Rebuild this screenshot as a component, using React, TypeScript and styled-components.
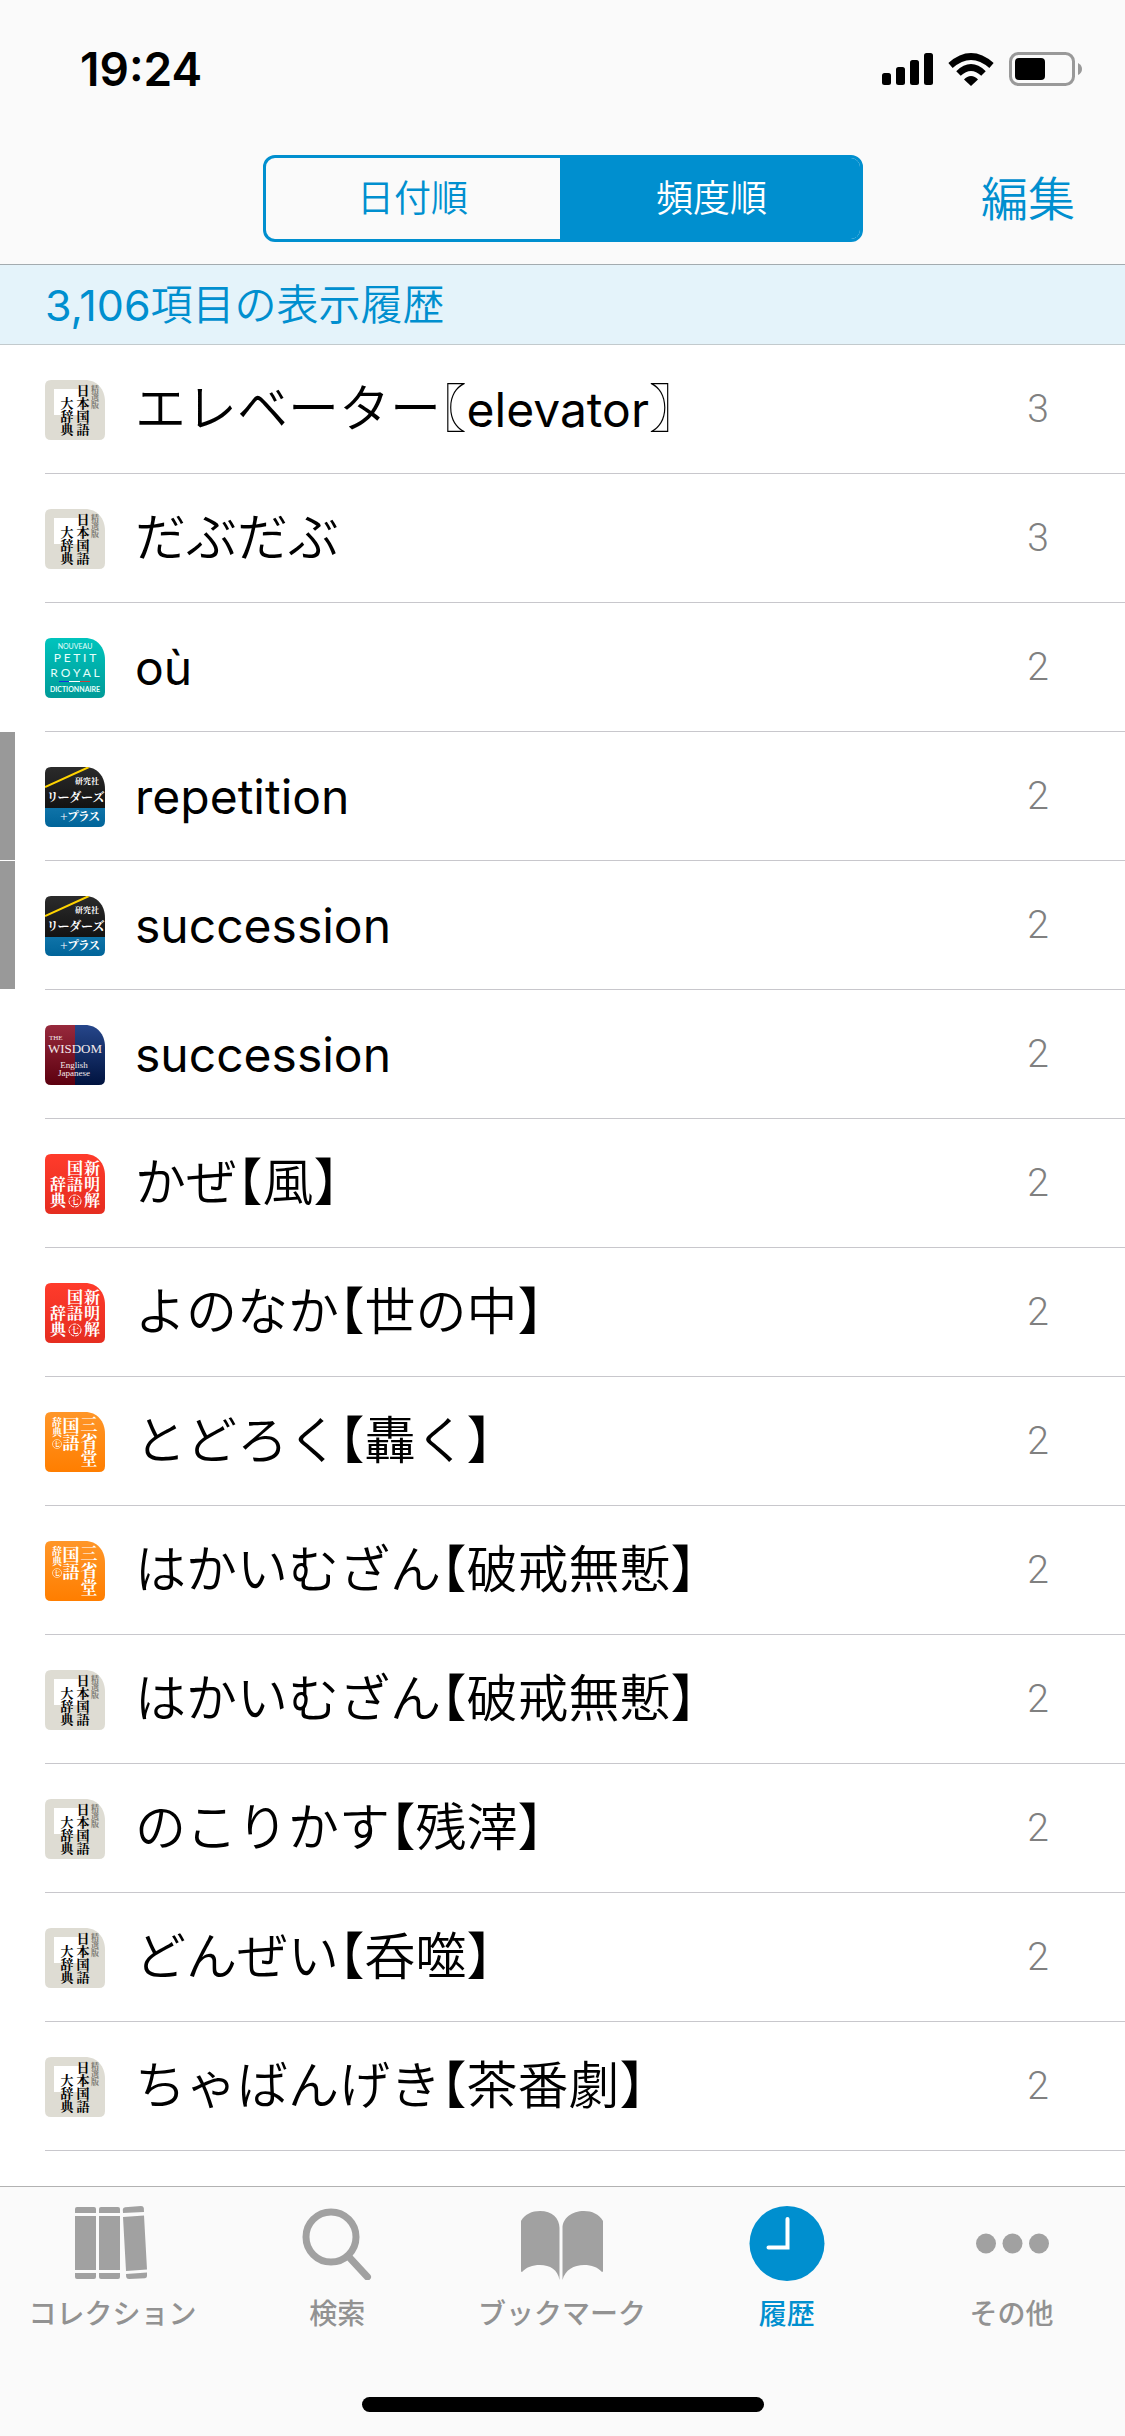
import type { ReactNode } from "react";
import { useState } from "react";
import styled, { createGlobalStyle } from "styled-components";

const GlobalStyle = createGlobalStyle`
  * {
    box-sizing: border-box;
  }

  body {
    margin: 0;
    background: #ffffff;
    color: #000000;
    font-family: "Inter", "Noto Sans CJK JP", sans-serif;
  }

  button {
    margin: 0;
    padding: 0;
    border: 0;
    background: none;
    font-family: inherit;
    cursor: pointer;
  }
`;

const Screen = styled.div`
  min-height: 100vh;
  display: flex;
  flex-direction: column;
`;

const Header = styled.header`
  background: #fafafa;
  border-bottom: 1px solid #a3abaf;
`;

const StatusBar = styled.div`
  height: 138px;
  padding: 0 43px 0 80px;
  display: flex;
  align-items: center;
  justify-content: space-between;
`;

const Clock = styled.time`
  font-size: 46px;
  font-weight: 600;
  line-height: 56px;
`;

const StatusIcons = styled.div`
  display: flex;
  align-items: center;
  gap: 15px;
`;

const NavBar = styled.nav`
  height: 126px;
  padding: 17px 50px 22px;
  display: grid;
  grid-template-columns: 1fr 600px 1fr;
  align-items: center;
`;

const Segments = styled.div`
  grid-column: 2;
  height: 87px;
  display: grid;
  grid-template-columns: 49fr 50fr;
  border: 3px solid #008fcf;
  border-radius: 12px;
  overflow: hidden;
`;

const Segment = styled.button<{ $active: boolean }>`
  background: ${({ $active }) => ($active ? "#008fcf" : "transparent")};
  color: ${({ $active }) => ($active ? "#ffffff" : "#008fcf")};
  font-size: 37px;
  font-weight: 350;
  line-height: 48px;

  & + & {
    padding-left: 4px;
  }
`;

const EditButton = styled.button`
  justify-self: end;
  color: #008fcf;
  font-size: 47px;
  font-weight: 350;
  line-height: 56px;
`;

const SectionTitle = styled.h2`
  height: 80px;
  margin: 0;
  padding: 0 45px;
  display: flex;
  align-items: center;
  background: #e4f3fa;
  border-bottom: 1px solid #c2cacd;
  color: #008fcf;
  font-size: 42px;
  font-weight: 350;
  line-height: 56px;

  span {
    font-size: 43px;
    font-weight: 400;
  }
`;

const List = styled.ul`
  flex: 1;
  margin: 0;
  padding: 0;
  list-style: none;
`;

const Row = styled.li`
  height: 129px;
  display: flex;
`;

const Marker = styled.div<{ $marked: boolean }>`
  width: 15px;
  margin: 0 30px 1px 0;
  background: ${({ $marked }) => ($marked ? "#999999" : "transparent")};
`;

const RowBody = styled.div`
  flex: 1;
  padding: 2px 76px 0 0;
  display: flex;
  align-items: center;
  border-bottom: 1px solid #c8c7cc;
`;

const Word = styled.span`
  flex: 1;
  margin-left: 30px;
  padding-bottom: 2px;
  font-size: 51px;
  font-weight: 350;
  line-height: 72px;
  font-feature-settings: "halt";
`;

const Latin = styled.span`
  font-size: 48px;
  font-weight: 400;
`;

const Count = styled.span`
  padding-bottom: 2px;
  color: #808080;
  font-family: "Roboto", sans-serif;
  font-size: 39px;
  font-weight: 300;
  line-height: 48px;
`;

const TabBar = styled.nav`
  background: #fafafa;
  border-top: 1px solid #b2b2b2;
`;

const Tabs = styled.div`
  height: 147px;
  padding: 17px 1px 0 0;
  display: grid;
  grid-template-columns: repeat(5, 1fr);
`;

const Tab = styled.button<{ $active: boolean }>`
  display: flex;
  flex-direction: column;
  align-items: center;
  gap: 16px;
  color: ${({ $active }) => ($active ? "#008fcf" : "#929292")};
  font-size: 28px;
  font-weight: 500;
  line-height: 36px;
  white-space: nowrap;

  svg {
    color: ${({ $active }) => ($active ? "#008fcf" : "#a1a1a1")};
  }
`;

const HomeArea = styled.div`
  height: 102px;
  padding-top: 63px;
`;

const HomeIndicator = styled.div`
  width: 402px;
  height: 15px;
  margin: 0 auto;
  border-radius: 8px;
  background: #000000;
`;

const VerticalText = styled.text`
  writing-mode: vertical-rl;
  font-family: "Noto Serif CJK JP", "Noto Sans CJK JP", serif;
  font-weight: 700;
`;

const KanaText = styled.text`
  font-family: "Noto Serif CJK JP", "Noto Sans CJK JP", serif;
  font-weight: 700;
  font-feature-settings: "palt";
  text-anchor: middle;
`;

const bookShape = "M6 0H40C52 0 60 9 60 22V54Q60 60 54 60H6Q0 60 0 54V6Q0 0 6 0Z";

function BookIcon({ children }: { children: ReactNode }) {
  return (
    <svg width="60" height="60" viewBox="0 0 60 60" aria-hidden="true">
      <defs>
        <clipPath id="book">
          <path d={bookShape} />
        </clipPath>
        <linearGradient id="teal" x1="0" y1="0" x2="0" y2="1">
          <stop offset="0" stopColor="#00c4bd" />
          <stop offset="1" stopColor="#009b98" />
        </linearGradient>
        <linearGradient id="black" x1="0" y1="0" x2="0" y2="1">
          <stop offset="0" stopColor="#2b2b2b" />
          <stop offset="1" stopColor="#121212" />
        </linearGradient>
        <linearGradient id="blue" x1="0" y1="0" x2="0" y2="1">
          <stop offset="0" stopColor="#0f73a8" />
          <stop offset="1" stopColor="#006499" />
        </linearGradient>
        <linearGradient id="wine" x1="0" y1="0" x2="0" y2="1">
          <stop offset="0" stopColor="#97293c" />
          <stop offset="1" stopColor="#5c000f" />
        </linearGradient>
        <linearGradient id="navy" x1="0" y1="0" x2="0" y2="1">
          <stop offset="0" stopColor="#26468a" />
          <stop offset="1" stopColor="#00133f" />
        </linearGradient>
        <linearGradient id="red" x1="0" y1="0" x2="0" y2="1">
          <stop offset="0" stopColor="#ff3b2b" />
          <stop offset="1" stopColor="#e52d20" />
        </linearGradient>
        <linearGradient id="orange" x1="0" y1="0" x2="0" y2="1">
          <stop offset="0" stopColor="#ff9628" />
          <stop offset="1" stopColor="#ff7e00" />
        </linearGradient>
      </defs>
      <g clipPath="url(#book)">{children}</g>
    </svg>
  );
}

const books = {
  nikkoku: (
    <BookIcon>
      <rect width="60" height="60" fill="#dedcd3" />
      <rect x="9" y="9" width="26" height="26" fill="#ffffff" />
      <VerticalText x="38" y="4" fontSize="13">日本国語</VerticalText>
      <VerticalText x="22" y="17" fontSize="13">大辞典</VerticalText>
      <VerticalText x="50" y="5" fontSize="8" fill="#77756f">精選版</VerticalText>
    </BookIcon>
  ),
  royal: (
    <BookIcon>
      <rect width="60" height="60" fill="url(#teal)" />
      <g fill="#e6fffc" fontFamily="Lato, sans-serif" textAnchor="middle">
        <text x="30" y="11" fontSize="7">NOUVEAU</text>
        <text x="30" y="24" fontSize="12">P E T I T</text>
        <text x="30" y="39" fontSize="12">R O Y A L</text>
        <text x="30" y="54" fontSize="7" fontWeight="700">DICTIONNAIRE</text>
      </g>
      <rect x="14" y="43" width="10" height="1" fill="#1731e0" />
      <rect x="24" y="43" width="11" height="1" fill="#ffffff" />
      <rect x="35" y="43" width="10" height="1" fill="#c8403c" />
    </BookIcon>
  ),
  readers: (
    <BookIcon>
      <rect width="60" height="42" fill="url(#black)" />
      <rect y="41" width="60" height="19" fill="url(#blue)" />
      <path d="M0 20L44 0" stroke="#ffd400" strokeWidth="2" />
      <g fill="#ffffff">
        <KanaText x="42" y="17" fontSize="8">研究社</KanaText>
        <KanaText x="31" y="35" fontSize="12">リーダーズ</KanaText>
        <KanaText x="35" y="54" fontSize="12">+プラス</KanaText>
      </g>
    </BookIcon>
  ),
  wisdom: (
    <BookIcon>
      <rect width="30" height="60" fill="url(#wine)" />
      <rect x="30" width="30" height="60" fill="url(#navy)" />
      <g fill="#f3e9ec" fontFamily="Liberation Serif, serif">
        <text x="4" y="15" fontSize="7">THE</text>
        <text x="30" y="28" fontSize="13" textAnchor="middle">WISDOM</text>
        <text x="29" y="43" fontSize="9" textAnchor="middle">English</text>
        <text x="29" y="51" fontSize="9" textAnchor="middle">Japanese</text>
      </g>
    </BookIcon>
  ),
  shinmeikai: (
    <BookIcon>
      <rect width="60" height="60" fill="url(#red)" />
      <g fill="#ffffff">
        <VerticalText x="47" y="6" fontSize="16">新明解</VerticalText>
        <VerticalText x="30" y="6" fontSize="16">国語</VerticalText>
        <VerticalText x="13" y="22" fontSize="16">辞典</VerticalText>
        <VerticalText x="30" y="43" fontSize="8">七</VerticalText>
      </g>
      <circle cx="30" cy="47" r="6" fill="none" stroke="#ffffff" strokeDasharray="4 1" />
    </BookIcon>
  ),
  sanseido: (
    <BookIcon>
      <rect width="60" height="60" fill="url(#orange)" />
      <g fill="#ffffff">
        <VerticalText x="44" y="4" fontSize="17">三省堂</VerticalText>
        <VerticalText x="26" y="5" fontSize="17">国語</VerticalText>
        <VerticalText x="12" y="5" fontSize="10">辞典</VerticalText>
        <VerticalText x="12" y="29" fontSize="6">七</VerticalText>
      </g>
      <circle cx="12" cy="32" r="4.500" fill="none" stroke="#ffd3a0" />
    </BookIcon>
  ),
};

type Entry = {
  word: string;
  book: keyof typeof books;
  count: number;
  marked?: boolean;
};

const entries: Entry[] = [
  { word: "エレベーター〖elevator〗", book: "nikkoku", count: 3 },
  { word: "だぶだぶ", book: "nikkoku", count: 3 },
  { word: "où", book: "royal", count: 2 },
  { word: "repetition", book: "readers", count: 2, marked: true },
  { word: "succession", book: "readers", count: 2, marked: true },
  { word: "succession", book: "wisdom", count: 2 },
  { word: "かぜ【風】", book: "shinmeikai", count: 2 },
  { word: "よのなか【世の中】", book: "shinmeikai", count: 2 },
  { word: "とどろく【轟く】", book: "sanseido", count: 2 },
  { word: "はかいむざん【破戒無慙】", book: "sanseido", count: 2 },
  { word: "はかいむざん【破戒無慙】", book: "nikkoku", count: 2 },
  { word: "のこりかす【残滓】", book: "nikkoku", count: 2 },
  { word: "どんぜい【呑噬】", book: "nikkoku", count: 2 },
  { word: "ちゃばんげき【茶番劇】", book: "nikkoku", count: 2 },
];

const tabs = [
  {
    label: "コレクション",
    icon: (
      <svg width="76" height="76" viewBox="1 0 76 76" fill="currentColor" aria-hidden="true">
        <path d="M2 9V5Q2 3 4 3H21Q23 3 23 5V9ZM2 12H23V66H2ZM2 69H23V73Q23 75 21 75H4Q2 75 2 73Z" />
        <path d="M26 9V5Q26 3 28 3H45Q47 3 47 5V9ZM26 12H47V66H26ZM26 69H47V73Q47 75 45 75H28Q26 75 26 73Z" />
        <path d="M50 9L49.800 5.500Q50 3.500 52 3.300L68 2Q70.500 2 70.800 4L71 8ZM50 13L71 11.500L74 65.500L53 67ZM53 70L74 68.500V72Q74 74 72 74.300L56 75Q53.500 75 53.200 73Z" />
      </svg>
    ),
  },
  {
    label: "検索",
    icon: (
      <svg width="76" height="76" viewBox="0 0 76 76" fill="none" stroke="currentColor" aria-hidden="true">
        <circle cx="32" cy="33" r="25" strokeWidth="7" />
        <path d="M50 53L68.500 73" strokeWidth="7" strokeLinecap="round" />
      </svg>
    ),
  },
  {
    label: "ブックマーク",
    icon: (
      <svg width="84" height="76" viewBox="0 0 84 76" fill="currentColor" aria-hidden="true">
        <path d="M1 17C5 10 12 7 20 7C32 7 39.500 14 39.500 24V76C38 66 30 61 20 61C12 61 7 63 2 68Q1 68 1 67Z" />
        <path d="M83 17C79 10 72 7 64 7C52 7 42.500 14 42.500 24V76C45 66 54 61 64 61C72 61 77 63 82 68Q83 68 83 67Z" />
      </svg>
    ),
  },
  {
    label: "履歴",
    icon: (
      <svg width="76" height="78" viewBox="0 0 76 78" aria-hidden="true">
        <circle cx="38" cy="39.500" r="37.500" fill="currentColor" />
        <path d="M38.500 15V43.500H19.500" fill="none" stroke="#ffffff" strokeWidth="4" strokeLinecap="round" />
      </svg>
    ),
  },
  {
    label: "その他",
    icon: (
      <svg width="76" height="76" viewBox="0 0 76 76" fill="currentColor" aria-hidden="true">
        <circle cx="12" cy="39.500" r="10" />
        <circle cx="38.500" cy="39.500" r="10" />
        <circle cx="65" cy="39.500" r="10" />
      </svg>
    ),
  },
];

const IconSlot = styled.span`
  height: 76px;
  display: flex;
`;

function HeadWord({ text }: { text: string }) {
  return (
    <Word>
      {text.split(/([a-zù]+)/).map((part, index) =>
        index % 2 ? <Latin key={index}>{part}</Latin> : part
      )}
    </Word>
  );
}

function App() {
  const [sort, setSort] = useState("頻度順");
  const [tab, setTab] = useState("履歴");

  return (
    <Screen lang="ja">
      <GlobalStyle />
      <Header>
        <StatusBar>
          <Clock>19:24</Clock>
          <StatusIcons>
            <svg width="51" height="32" viewBox="0 0 51 32" aria-label="電波">
              <rect x="0" y="20" width="9" height="12" rx="2.500" />
              <rect x="14" y="14" width="9" height="18" rx="2.500" />
              <rect x="28" y="7" width="9" height="25" rx="2.500" />
              <rect x="42" y="0" width="9" height="32" rx="2.500" />
            </svg>
            <svg width="46" height="33" viewBox="0 0 46 33" aria-label="Wi-Fi">
              <path d="M23 33L16 26.500Q19 23 23 23Q27 23 30 26.500Z" />
              <path d="M10.500 20.500Q23 8.500 35.500 20.500" fill="none" stroke="#000000" strokeWidth="6.500" />
              <path d="M2.500 12.500Q23 -5.500 43.500 12.500" fill="none" stroke="#000000" strokeWidth="6.500" />
            </svg>
            <svg width="73" height="34" viewBox="0 0 73 34" aria-label="バッテリー">
              <rect x="1.500" y="1.500" width="63" height="31" rx="8" fill="none" stroke="#999999" strokeWidth="3" />
              <rect x="6" y="6" width="30" height="22" rx="4" />
              <path d="M69 11Q73 13 73 17Q73 21 69 23Z" fill="#999999" />
            </svg>
          </StatusIcons>
        </StatusBar>
        <NavBar>
          <Segments>
            {["日付順", "頻度順"].map((label) => (
              <Segment
                key={label}
                $active={sort === label}
                aria-pressed={sort === label}
                onClick={() => setSort(label)}
              >
                {label}
              </Segment>
            ))}
          </Segments>
          <EditButton>編集</EditButton>
        </NavBar>
      </Header>

      <SectionTitle>
        <span>3,106</span>項目の表示履歴
      </SectionTitle>

      <List>
        {entries.map((entry, index) => (
          <Row key={index}>
            <Marker $marked={Boolean(entry.marked)} />
            <RowBody>
              {books[entry.book]}
              <HeadWord text={entry.word} />
              <Count>{entry.count}</Count>
            </RowBody>
          </Row>
        ))}
      </List>

      <TabBar>
        <Tabs>
          {tabs.map(({ label, icon }) => (
            <Tab key={label} $active={tab === label} onClick={() => setTab(label)}>
              <IconSlot>{icon}</IconSlot>
              {label}
            </Tab>
          ))}
        </Tabs>
        <HomeArea>
          <HomeIndicator />
        </HomeArea>
      </TabBar>
    </Screen>
  );
}

export default App;
